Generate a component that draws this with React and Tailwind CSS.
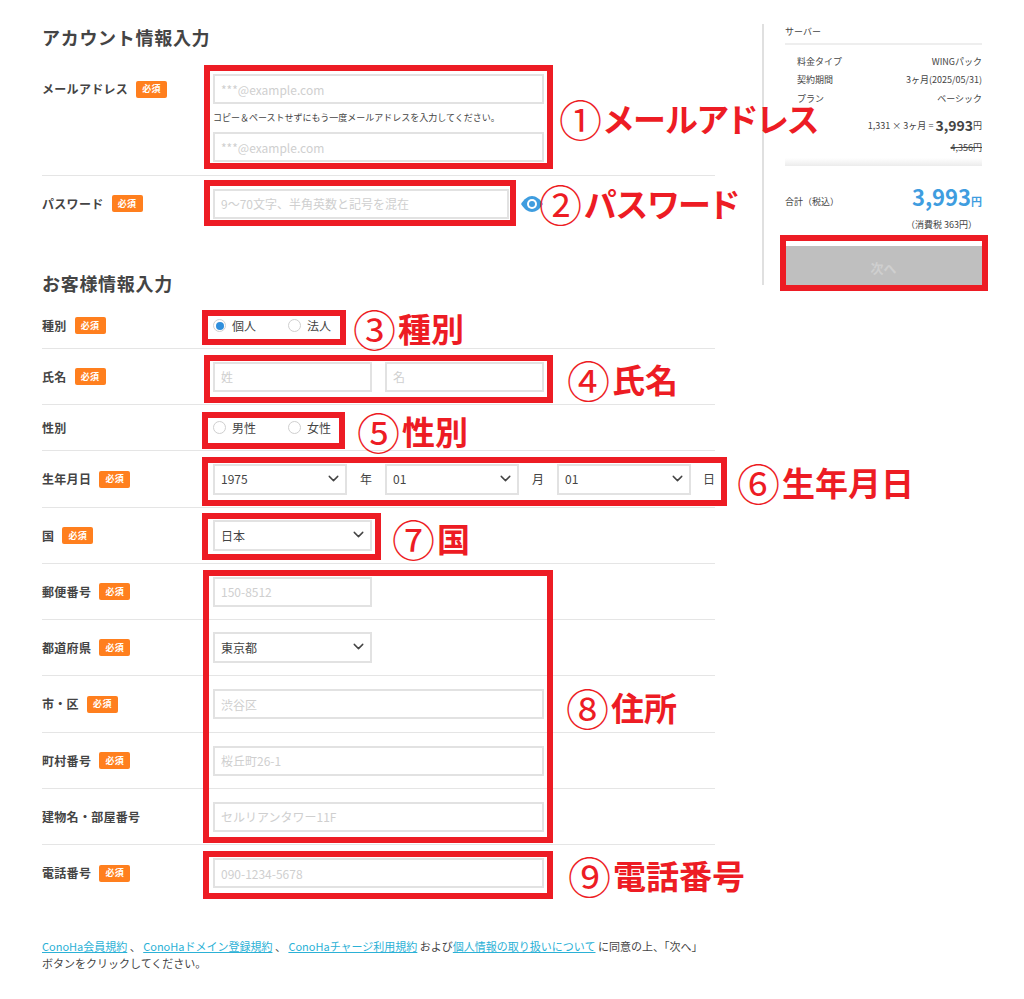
import { ChevronDown } from 'lucide-react';

const inputClass =
    'h-[30px] border-2 border-[#e2e2e2] bg-white px-[6px] text-[12px] outline-none placeholder:text-[#cfcfcf]';

function Badge() {
    return (
        <span className="ml-[8px] flex h-[17px] w-[31px] items-center justify-center rounded-[2px] bg-[#ff7f1e] text-[9px] font-bold text-white">
            必須
        </span>
    );
}

function Label({ children, required = true }) {
    return (
        <div className="flex w-[171px] shrink-0 items-center text-[12px] font-bold tracking-[0.3px] text-[#444]">
            <span>{children}</span>
            {required && <Badge />}
        </div>
    );
}

function Select({ value, className }) {
    return (
        <div className={`relative ${className}`}>
            <select
                defaultValue={value}
                className="h-[31px] w-full appearance-none border-2 border-[#e2e2e2] bg-white px-[6px] text-[12px] text-[#444] outline-none"
            >
                <option>{value}</option>
            </select>
            <ChevronDown className="pointer-events-none absolute right-[5px] top-[6px] h-[17px] w-[17px] text-[#444]" strokeWidth={2} />
        </div>
    );
}

function Radio({ label, checked }) {
    return (
        <label className="flex w-[75px] items-center text-[12px] text-[#444]">
            <span className="mr-[6px] flex h-[13px] w-[13px] items-center justify-center rounded-full border border-[#cfcfcf] bg-white">
                {checked && <span className="h-[8px] w-[8px] rounded-full bg-[#2f8fdc]" />}
            </span>
            {label}
        </label>
    );
}

function Summary({ name, value }) {
    return (
        <div className="flex h-[18.5px] items-center justify-between pl-[12px]">
            <span>{name}</span>
            <span>{value}</span>
        </div>
    );
}

function Callout({ mark, text, className }) {
    return (
        <div className={`absolute flex h-[40px] items-center text-[33px] font-bold leading-none text-[#ed1c24] [font-feature-settings:'palt'] ${className}`}>
            <span className="text-[43px] font-normal leading-none">{mark}</span>
            <span className="ml-[2px]">{text}</span>
        </div>
    );
}

function RedBox({ className }) {
    return <div className={`pointer-events-none absolute border-[6px] border-[#ed1c24] ${className}`} />;
}

export default function App() {
    return (
        <div className="relative flex h-[999px] w-[1024px] overflow-hidden bg-white font-['Noto_Sans_CJK_JP','Noto_Sans',sans-serif] text-[#444]">
            <main className="ml-[42px] w-[673px] shrink-0">
                <h2 className="mt-[24px] text-[18px] font-bold leading-[26px] tracking-[0.7px]">アカウント情報入力</h2>

                <div className="mt-[16px] flex h-[110px] items-start border-b border-[#e5e5e5] pt-[8px]">
                    <div className="flex h-[30px] items-center">
                        <Label>メールアドレス</Label>
                    </div>
                    <div className="flex flex-col">
                        <input className={`${inputClass} w-[331px]`} placeholder="***@example.com" />
                        <p className="flex h-[28px] items-center text-[9px]">コピー＆ペーストせずにもう一度メールアドレスを入力してください。</p>
                        <input className={`${inputClass} w-[331px]`} placeholder="***@example.com" />
                    </div>
                </div>

                <div className="flex h-[55px] items-center">
                    <Label>パスワード</Label>
                    <input className={`${inputClass} w-[296px]`} placeholder="9〜70文字、半角英数と記号を混在" />
                    <svg viewBox="0 0 22 16" className="ml-[12px] h-[16px] w-[22px]">
                        <path d="M0 8C3 3 7 0 11 0s8 3 11 8c-3 5-7 8-11 8S3 13 0 8z" fill="#3f9ddf" />
                        <circle cx="11" cy="8" r="5" fill="#fff" />
                        <circle cx="11" cy="8" r="3" fill="#3f9ddf" />
                    </svg>
                </div>

                <h2 className="mt-[39px] text-[18px] font-bold leading-[26px] tracking-[0.7px]">お客様情報入力</h2>

                <div className="mt-[7px] flex h-[46px] items-center border-b border-[#e5e5e5]">
                    <Label>種別</Label>
                    <Radio label="個人" checked />
                    <Radio label="法人" />
                </div>
                <div className="flex h-[56px] items-center border-b border-[#e5e5e5]">
                    <Label>氏名</Label>
                    <div className="flex gap-[13px]">
                        <input className={`${inputClass} w-[159px]`} placeholder="姓" />
                        <input className={`${inputClass} w-[159px]`} placeholder="名" />
                    </div>
                </div>
                <div className="flex h-[46px] items-center border-b border-[#e5e5e5]">
                    <Label required={false}>性別</Label>
                    <Radio label="男性" />
                    <Radio label="女性" />
                </div>
                <div className="flex h-[57px] items-center border-b border-[#e5e5e5]">
                    <Label>生年月日</Label>
                    <Select value="1975" className="w-[134px]" />
                    <span className="w-[38px] text-center text-[12px]">年</span>
                    <Select value="01" className="w-[134px]" />
                    <span className="w-[38px] text-center text-[12px]">月</span>
                    <Select value="01" className="w-[134px]" />
                    <span className="w-[24px] text-right text-[12px]">日</span>
                </div>
                <div className="flex h-[56px] items-center border-b border-[#e5e5e5]">
                    <Label>国</Label>
                    <Select value="日本" className="w-[159px]" />
                </div>
                <div className="flex h-[56px] items-center border-b border-[#e5e5e5]">
                    <Label>郵便番号</Label>
                    <input className={`${inputClass} w-[159px]`} placeholder="150-8512" />
                </div>
                <div className="flex h-[56px] items-center border-b border-[#e5e5e5]">
                    <Label>都道府県</Label>
                    <Select value="東京都" className="w-[159px]" />
                </div>
                <div className="flex h-[57px] items-center border-b border-[#e5e5e5]">
                    <Label>市・区</Label>
                    <input className={`${inputClass} w-[331px]`} placeholder="渋谷区" />
                </div>
                <div className="flex h-[56px] items-center border-b border-[#e5e5e5]">
                    <Label>町村番号</Label>
                    <input className={`${inputClass} w-[331px]`} placeholder="桜丘町26-1" />
                </div>
                <div className="flex h-[56px] items-center border-b border-[#e5e5e5]">
                    <Label required={false}>建物名・部屋番号</Label>
                    <input className={`${inputClass} w-[331px]`} placeholder="セルリアンタワー11F" />
                </div>
                <div className="flex h-[56px] items-center">
                    <Label>電話番号</Label>
                    <input className={`${inputClass} w-[331px]`} placeholder="090-1234-5678" />
                </div>

                <p className="mt-[37px] w-[665px] text-[11px] leading-[17px]">
                    <a className="text-[#2bb1d6] underline">ConoHa会員規約</a> 、 <a className="text-[#2bb1d6] underline">ConoHaドメイン登録規約</a> 、 <a className="text-[#2bb1d6] underline">ConoHaチャージ利用規約</a> および<a className="text-[#2bb1d6] underline">個人情報の取り扱いについて</a> に同意の上、「次へ」ボタンをクリックしてください。
                </p>
            </main>

            <aside className="ml-[47px] mt-[24px] h-[261px] w-[220px] border-l-2 border-[#e0e0e0] pl-[21px] text-[9px]">
                <div className="w-[197px]">
                    <div className="flex h-[21px] items-center border-b-2 border-[#eee] pb-[4px]">サーバー</div>
                    <div className="mt-[7px]">
                        <Summary name="料金タイプ" value="WINGパック" />
                        <Summary name="契約期間" value="3ヶ月(2025/05/31)" />
                        <Summary name="プラン" value="ベーシック" />
                    </div>
                    <div className="mt-[8px] flex h-[20px] items-center justify-end">
                        1,331 × 3ヶ月 =<span className="ml-[2px] text-[14px] font-bold">3,993</span>円
                    </div>
                    <div className="mt-[2px] flex h-[20px] items-center justify-end line-through">4,356円</div>
                    <div className="h-[8px] bg-gradient-to-b from-white to-[#ececec]" />
                    <div className="mt-[15px] flex items-center justify-between">
                        <span className="mt-[8px]">合計（税込）</span>
                        <span className="text-[22px] font-bold leading-[30px] text-[#3f9ddf]">
                            3,993<span className="text-[11px]">円</span>
                        </span>
                    </div>
                    <div className="mt-[2px] pr-[5px] text-right">（消費税 363円）</div>
                    <button className="mt-[15px] h-[44px] w-full bg-[#bfbfbf] text-[13px] font-bold text-[#cfcfcf]">次へ</button>
                </div>
            </aside>

            {/* 説明用の赤枠 */}
            <RedBox className="left-[204px] top-[65px] h-[104px] w-[349px]" />
            <RedBox className="left-[204px] top-[180px] h-[46px] w-[312px]" />
            <RedBox className="left-[202px] top-[310px] h-[35px] w-[144px]" />
            <RedBox className="left-[204px] top-[355px] h-[48px] w-[349px]" />
            <RedBox className="left-[202px] top-[412px] h-[37px] w-[143px]" />
            <RedBox className="left-[202px] top-[457px] h-[49px] w-[525px]" />
            <RedBox className="left-[202px] top-[513px] h-[47px] w-[179px]" />
            <RedBox className="left-[203px] top-[570px] h-[273px] w-[350px]" />
            <RedBox className="left-[203px] top-[851px] h-[48px] w-[350px]" />
            <RedBox className="left-[780px] top-[235px] h-[56px] w-[208px]" />

            <Callout mark="①" text="メールアドレス" className="left-[559px] top-[98px]" />
            <Callout mark="②" text="パスワード" className="left-[539px] top-[183px]" />
            <Callout mark="③" text="種別" className="left-[353px] top-[308px]" />
            <Callout mark="④" text="氏名" className="left-[567px] top-[359px]" />
            <Callout mark="⑤" text="性別" className="left-[357px] top-[411px]" />
            <Callout mark="⑥" text="生年月日" className="left-[737px] top-[462px]" />
            <Callout mark="⑦" text="国" className="left-[392px] top-[518px]" />
            <Callout mark="⑧" text="住所" className="left-[566px] top-[687px]" />
            <Callout mark="⑨" text="電話番号" className="left-[568px] top-[855px]" />
        </div>
    );
}
